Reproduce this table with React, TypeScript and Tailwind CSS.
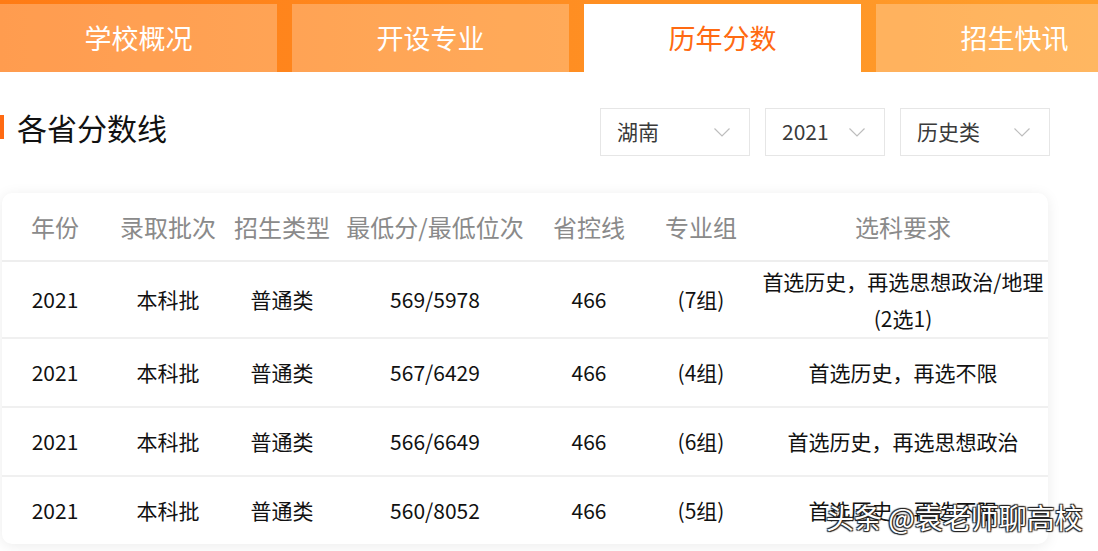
import React from "react";

const tabs = ["学校概况", "开设专业", "历年分数", "招生快讯"];

const cols = [
  "w-[106px]",
  "w-[120px]",
  "w-[108px]",
  "w-[198px]",
  "w-[110px]",
  "w-[114px]",
  "flex-1",
];

const headers = ["年份", "录取批次", "招生类型", "最低分/最低位次", "省控线", "专业组", "选科要求"];

const rows: { cells: string[]; req: React.ReactNode; h: string }[] = [
  {
    cells: ["2021", "本科批", "普通类", "569/5978", "466", "(7组)"],
    req: (
      <>
        <span>首选历史，再选思想政治/地理</span>
        <span>(2选1)</span>
      </>
    ),
    h: "h-[77px]",
  },
  {
    cells: ["2021", "本科批", "普通类", "567/6429", "466", "(4组)"],
    req: <span>首选历史，再选不限</span>,
    h: "h-[69px]",
  },
  {
    cells: ["2021", "本科批", "普通类", "566/6649", "466", "(6组)"],
    req: <span>首选历史，再选思想政治</span>,
    h: "h-[69px]",
  },
  {
    cells: ["2021", "本科批", "普通类", "560/8052", "466", "(5组)"],
    req: <span>首选历史，再选不限</span>,
    h: "h-[67px]",
  },
];

function Chevron() {
  return (
    <svg width="16" height="9" viewBox="0 0 16 9" fill="none" className="shrink-0">
      <path d="M0.5 0.5 L8 8 L15.5 0.5" stroke="#bdbdbd" strokeWidth="1.2" />
    </svg>
  );
}

function Select({ label, w }: { label: string; w: string }) {
  return (
    <div
      className={`${w} h-[48px] border border-[#e6e6e6] flex items-center justify-between pl-[16px] pr-[19px] text-[21px] text-[#3a3a3a]`}
    >
      <span>{label}</span>
      <Chevron />
    </div>
  );
}

export default function App() {
  return (
    <div
      className="relative w-[1098px] h-[551px] overflow-hidden bg-white"
      style={{ fontFamily: '"Noto Sans CJK SC", "Noto Sans", sans-serif' }}
    >
      {/* Tabs */}
      <div className="flex gap-[15px] pt-[4px] bg-gradient-to-r from-[#ff7b15] to-[#ffa22e] w-[1200px]">
        {tabs.map((t, i) => (
          <div
            key={t}
            className={`w-[277px] h-[68px] shrink-0 flex items-center justify-center text-[27px] ${
              i === 2 ? "bg-white text-[#ff6a12]" : "bg-white/25 text-white"
            }`}
          >
            {t}
          </div>
        ))}
      </div>

      {/* Title row */}
      <div className="flex items-start justify-between mt-[36px] pr-[48px]">
        <div className="flex items-center mt-[1px]">
          <div className="w-[4px] h-[24px] bg-[#ff6a12]" />
          <div className="ml-[13px] text-[30px] text-[#111] leading-[36px]">各省分数线</div>
        </div>
        <div className="flex gap-[15px]">
          <Select label="湖南" w="w-[150px]" />
          <Select label="2021" w="w-[120px]" />
          <Select label="历史类" w="w-[150px]" />
        </div>
      </div>

      {/* Table card */}
      <div className="ml-[2px] mt-[37px] w-[1046px] rounded-[10px] bg-white shadow-[0_2px_14px_rgba(0,0,0,0.08)] overflow-hidden">
        <div className="flex h-[69px] items-center border-b-2 border-[#eeeeee] text-[24px] text-[#8a8a8a]">
          {headers.map((h, i) => (
            <div key={h} className={`${cols[i]} text-center shrink-0 whitespace-nowrap`}>
              {h}
            </div>
          ))}
        </div>
        {rows.map((r, ri) => (
          <div
            key={ri}
            className={`flex ${r.h} items-center text-[21px] text-[#111] ${
              ri < rows.length - 1 ? "border-b-2 border-[#f0f0f0]" : ""
            }`}
          >
            {r.cells.map((c, i) => (
              <div key={i} className={`${cols[i]} text-center shrink-0`}>
                {c}
              </div>
            ))}
            <div className="flex-1 flex flex-col items-center leading-[37px] whitespace-nowrap">{r.req}</div>
          </div>
        ))}
      </div>

      {/* Watermark */}
      <div className="absolute left-[826px] top-[496px] text-[28px] text-white whitespace-nowrap [text-shadow:1px_1px_1px_#222,-1px_-1px_1px_#222,1px_-1px_1px_#222,-1px_1px_1px_#222]">
        头条 @袁老师聊高校
      </div>
    </div>
  );
}
